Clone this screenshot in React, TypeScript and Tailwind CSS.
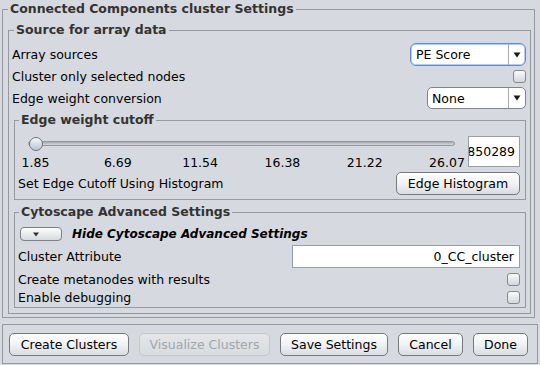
import React from "react";

const Arrow = () => (
  <svg width="8" height="6" viewBox="0 0 8 6" className="block">
    <path d="M0.5 0.5 H7.5 L4 5.5 Z" fill="#1a1a1a" />
  </svg>
);

function Checkbox() {
  return (
    <div className="w-[13px] h-[13px] rounded-[3px] border border-[#85898f] bg-gradient-to-b from-[#fbfbfc] to-[#d3d6db]" />
  );
}

function Btn({ children, className }: { children: React.ReactNode; className: string }) {
  return (
    <div
      className={
        "h-[23px] flex items-center justify-center rounded-[5px] border border-[#767a80] bg-gradient-to-b from-[#fefefe] via-[#f1f2f4] to-[#d9dce0] text-black whitespace-nowrap " +
        className
      }
    >
      {children}
    </div>
  );
}

export default function App() {
  return (
    <div className="w-[540px] h-[365px] overflow-hidden bg-[#d6d9df] font-['DejaVu_Sans',sans-serif] text-[12.5px] leading-[15px] text-black">
      <fieldset className="ml-[2px] w-[533px] border border-[#96999f] pl-[5px] pr-[3px] pt-[3px] pb-[3px]">
        <legend className="h-[18px] leading-[18px] px-[2px] font-bold text-[#333333]">
          Connected Components cluster Settings
        </legend>

        <fieldset className="border border-[#96999f] pl-[3px] pr-[4px] pt-[4px] pb-[5px]">
          <legend className="h-[18px] leading-[18px] ml-[2px] px-[2px] font-bold text-[#333333]">
            Source for array data
          </legend>

          <div className="h-[23px] flex items-center justify-between">
            <span>Array sources</span>
            <div className="w-[116px] h-[23px] flex items-stretch rounded-[6px] border border-[#5f8ccb] bg-white shadow-[inset_0_0_0_1px_#b5cdee]">
              <div className="flex-1 flex items-center pl-[5px]">PE Score</div>
              <div className="w-[17px] border-l border-[#a5a8ae] flex items-center justify-center">
                <Arrow />
              </div>
            </div>
          </div>

          <div className="mt-[2px] h-[16px] flex items-center justify-between">
            <span>Cluster only selected nodes</span>
            <Checkbox />
          </div>

          <div className="mt-[3px] h-[22px] flex items-center justify-between">
            <span>Edge weight conversion</span>
            <div className="w-[99px] h-[22px] flex items-stretch rounded-[5px] border border-[#80848a] bg-white">
              <div className="flex-1 flex items-center pl-[4px]">None</div>
              <div className="w-[17px] border-l border-[#a5a8ae] flex items-center justify-center">
                <Arrow />
              </div>
            </div>
          </div>

          <fieldset className="mt-[2px] ml-[2px] border border-[#96999f] pl-[3px] pr-[5px] pb-[4px]">
            <legend className="h-[18px] leading-[18px] ml-[1px] px-[2px] font-bold text-[#333333]">
              Edge weight cutoff
            </legend>

            <div className="mt-[7px] flex items-start justify-between">
              <div className="w-[448px] h-[36px]">
                <div className="relative h-[19px]">
                  <div className="absolute left-[10px] top-[5px] w-[427px] h-[5px] rounded-full border border-[#94989f] bg-gradient-to-b from-[#a7abb2] to-[#d2d5da]" />
                  <div className="absolute left-[11px] top-[1px] w-[14px] h-[14px] rounded-full border border-[#6f757e] bg-gradient-to-b from-[#f6f8fb] to-[#bcc4cf]" />
                </div>
                <div className="ml-[17.5px] w-[411.5px] h-[16px] leading-[16px] flex justify-between">
                  {["1.85", "6.69", "11.54", "16.38", "21.22", "26.07"].map((t) => (
                    <div key={t} className="w-0 flex justify-center">
                      <span className="whitespace-nowrap">{t}</span>
                    </div>
                  ))}
                </div>
              </div>
              <div className="w-[52px] h-[31px] border border-[#9a9ea4] bg-white overflow-hidden flex items-center justify-end pr-[4px]">
                <span className="whitespace-nowrap">850289</span>
              </div>
            </div>

            <div className="h-[23px] flex items-center justify-between">
              <span>Set Edge Cutoff Using Histogram</span>
              <Btn className="w-[124px]">Edge Histogram</Btn>
            </div>
          </fieldset>

          <fieldset className="mt-[3px] ml-[2px] border border-[#96999f] pl-[3px] pr-[5px] pb-[2px]">
            <legend className="h-[18px] leading-[18px] ml-[1px] px-[2px] font-bold text-[#333333]">
              Cytoscape Advanced Settings
            </legend>

            <div className="mt-[4px] h-[18px] flex items-center">
              <div className="ml-[2px] w-[42px] h-[14px] rounded-[4px] border border-[#7d8187] bg-gradient-to-b from-[#fdfdfd] to-[#d7dade] flex items-center pl-[12px]">
                <svg width="6" height="5" viewBox="0 0 6 5" className="block">
                  <path d="M0 0.5 H6 L3 4.5 Z" fill="#333" />
                </svg>
              </div>
              <span className="ml-[10px] text-[12px] font-bold italic">Hide Cytoscape Advanced Settings</span>
            </div>

            <div className="mt-[2px] h-[23px] flex items-center justify-between">
              <span>Cluster Attribute</span>
              <div className="w-[228px] h-[23px] border border-[#9a9ea4] bg-white flex items-center justify-end pr-[5px]">
                0_CC_cluster
              </div>
            </div>

            <div className="mt-[3px] h-[16px] flex items-center justify-between">
              <span>Create metanodes with results</span>
              <Checkbox />
            </div>

            <div className="mt-[2px] h-[16px] flex items-center justify-between">
              <span>Enable debugging</span>
              <Checkbox />
            </div>
          </fieldset>
        </fieldset>
      </fieldset>

      <div className="mt-[6px] ml-[2px] w-[536px] h-[40px] border border-[#96999f] pl-[6px] pt-[8px] flex items-start gap-[10px]">
        <Btn className="w-[120px]">Create Clusters</Btn>
        <div className="w-[131px] h-[23px] flex items-center justify-center rounded-[5px] border border-[#c3c6cb] bg-gradient-to-b from-[#e4e6e9] to-[#d9dce0] text-[#a2a6ac] whitespace-nowrap">
          Visualize Clusters
        </div>
        <Btn className="w-[108px]">Save Settings</Btn>
        <Btn className="w-[65px]">Cancel</Btn>
        <Btn className="w-[55px]">Done</Btn>
      </div>
    </div>
  );
}
